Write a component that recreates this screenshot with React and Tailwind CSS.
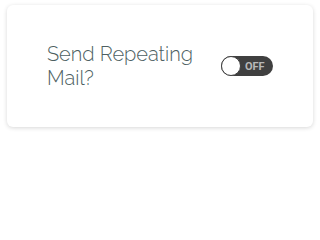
export default function App() {
  return (
    <div className="w-[320px] h-[200px] bg-white pt-[5px] pl-[7px]">
      <div className="w-[306px] h-[122px] bg-white rounded-[6px] shadow-[0_1px_4px_rgba(0,0,0,0.16)] flex items-center pl-[40px]">
        <div
          className="w-[174px] text-[20px] leading-[24px] font-light text-[#4d5f62]"
          style={{ fontFamily: "Raleway, Lato, 'Open Sans', sans-serif" }}
        >
          Send Repeating
          <br />
          Mail?
        </div>
        <div className="relative w-[52px] h-[20px] rounded-full bg-[#404040] flex items-center">
          <div className="absolute left-0 top-0 w-[20px] h-[20px] rounded-full bg-white border border-[#404040]" />
          <span
            className="ml-[24px] text-[11px] font-bold text-[#b8b8b8] leading-none"
            style={{ fontFamily: "Roboto, 'Liberation Sans', sans-serif" }}
          >
            OFF
          </span>
        </div>
      </div>
    </div>
  );
}
